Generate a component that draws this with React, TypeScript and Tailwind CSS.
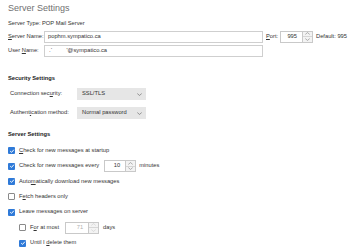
import React from 'react';

const font = { fontFamily: '"Liberation Sans", Arial, sans-serif' };

function U({ children }: { children: React.ReactNode }) {
  return <span className="underline underline-offset-[1px]">{children}</span>;
}

function Check({ on, children }: { on?: boolean; children: React.ReactNode }) {
  return (
    <div className="flex items-center gap-[4px] whitespace-nowrap">
      {on ? (
        <span className="shrink-0 w-[7px] h-[7px] bg-[#2f7ad8] rounded-[1px] flex items-center justify-center">
          <svg viewBox="0 0 10 10" className="w-[6px] h-[6px]">
            <path d="M2 5.2 L4.2 7.3 L8.2 2.8" fill="none" stroke="white" strokeWidth="1.6" />
          </svg>
        </span>
      ) : (
        <span className="shrink-0 w-[7px] h-[7px] border border-[#8a8a8a] rounded-[1px] bg-white" />
      )}
      <span>{children}</span>
    </div>
  );
}

function Spinner({ disabled }: { disabled?: boolean }) {
  const c = disabled ? '#c8c8c8' : '#7a7a7a';
  return (
    <div className="shrink-0 flex flex-col w-[11px] h-[12px] border border-[#c9c9c9] bg-[#f3f3f3]">
      <div className="flex-1 flex items-center justify-center border-b border-[#d6d6d6]">
        <svg viewBox="0 0 8 4" className="w-[5px] h-[3px]">
          <path d="M0.5 3.5 L4 0.5 L7.5 3.5" fill="none" stroke={c} strokeWidth="0.9" />
        </svg>
      </div>
      <div className="flex-1 flex items-center justify-center">
        <svg viewBox="0 0 8 4" className="w-[5px] h-[3px]">
          <path d="M0.5 0.5 L4 3.5 L7.5 0.5" fill="none" stroke={c} strokeWidth="0.9" />
        </svg>
      </div>
    </div>
  );
}

function NumBox({ value, w, disabled }: { value: string; w: string; disabled?: boolean }) {
  return (
    <div className="flex items-center shrink-0">
      <div
        className={`${w} h-[12px] border border-r-0 border-[#c9c9c9] bg-white flex items-center justify-end pr-[5px] ${
          disabled ? 'text-[#b0b0b0]' : 'text-[#333]'
        }`}
      >
        {value}
      </div>
      <Spinner disabled={disabled} />
    </div>
  );
}

function Select({ value }: { value: string }) {
  return (
    <div className="shrink-0 w-[69px] h-[12px] bg-[#e6e6e6] flex items-center justify-between pl-[5px] pr-[4px]">
      <span>{value}</span>
      <svg viewBox="0 0 8 4" className="w-[5px] h-[3px]">
        <path d="M0.5 0.5 L4 3.5 L7.5 0.5" fill="none" stroke="#555" strokeWidth="0.9" />
      </svg>
    </div>
  );
}

export default function App() {
  return (
    <div
      className="w-[360px] h-[250px] bg-white overflow-hidden pl-[8px] text-[5.75px] text-[#333] leading-none whitespace-nowrap"
      style={font}
    >
      <div className="h-[17px] flex items-center text-[9px] font-light text-[#707070]">Server Settings</div>

      <div className="h-[13px] flex items-center">
        <span className="shrink-0 w-[34px]">Server Type:</span>
        <span>POP Mail Server</span>
      </div>

      <div className="h-[13px] flex items-center">
        <span className="shrink-0 w-[36px]">
          <U>S</U>erver Name:
        </span>
        <div className="shrink-0 w-[219px] h-[12px] border border-[#cfcfcf] flex items-center pl-[3px]">pophm.sympatico.ca</div>
        <span className="shrink-0 ml-[3px] w-[14px]">
          <U>P</U>ort:
        </span>
        <NumBox value="995" w="w-[22px]" />
        <span className="ml-[3px]">Default: 995</span>
      </div>

      <div className="h-[12px] flex items-center mt-[2px]">
        <span className="shrink-0 w-[36px]">
          User <U>N</U>ame:
        </span>
        <div className="shrink-0 w-[219px] h-[12px] border border-[#cfcfcf] flex items-center pl-[4px]">
          <span>.ˊ</span>
          <span className="ml-[14px]">'@sympatico.ca</span>
        </div>
      </div>

      <div className="h-[12px] flex items-center mt-[16px] font-bold text-[#222]">Security Settings</div>

      <div className="h-[12px] flex items-center mt-[3px] pl-[2px]">
        <span className="shrink-0 w-[67px]">
          Connection sec<U>u</U>rity:
        </span>
        <Select value="SSL/TLS" />
      </div>

      <div className="h-[12px] flex items-center mt-[7px] pl-[2px]">
        <span className="shrink-0 w-[67px]">
          Authent<U>i</U>cation method:
        </span>
        <Select value="Normal password" />
      </div>

      <div className="h-[12px] flex items-center mt-[10px] font-bold text-[#222]">Server Settings</div>

      <div className="flex flex-col mt-[2px]">
        <div className="h-[15.4px] flex items-center">
          <Check on>
            <U>C</U>heck for new messages at startup
          </Check>
        </div>
        <div className="h-[15.4px] flex items-center">
          <Check on>Check for new messages every</Check>
          <div className="ml-[5px]">
            <NumBox value="10" w="w-[21px]" />
          </div>
          <span className="ml-[3px]">minutes</span>
        </div>
        <div className="h-[15.4px] flex items-center">
          <Check on>
            Auto<U>m</U>atically download new messages
          </Check>
        </div>
        <div className="h-[15.4px] flex items-center">
          <Check>
            F<U>e</U>tch headers only
          </Check>
        </div>
        <div className="h-[15.4px] flex items-center">
          <Check on>Leave messages on server</Check>
        </div>
        <div className="h-[15.4px] flex items-center pl-[11px]">
          <Check>
            F<U>o</U>r at most
          </Check>
          <div className="ml-[6px]">
            <NumBox value="71" w="w-[23px]" disabled />
          </div>
          <span className="ml-[4px]">days</span>
        </div>
        <div className="h-[15.4px] flex items-center pl-[11px]">
          <Check on>
            Until I <U>d</U>elete them
          </Check>
        </div>
      </div>
    </div>
  );
}
